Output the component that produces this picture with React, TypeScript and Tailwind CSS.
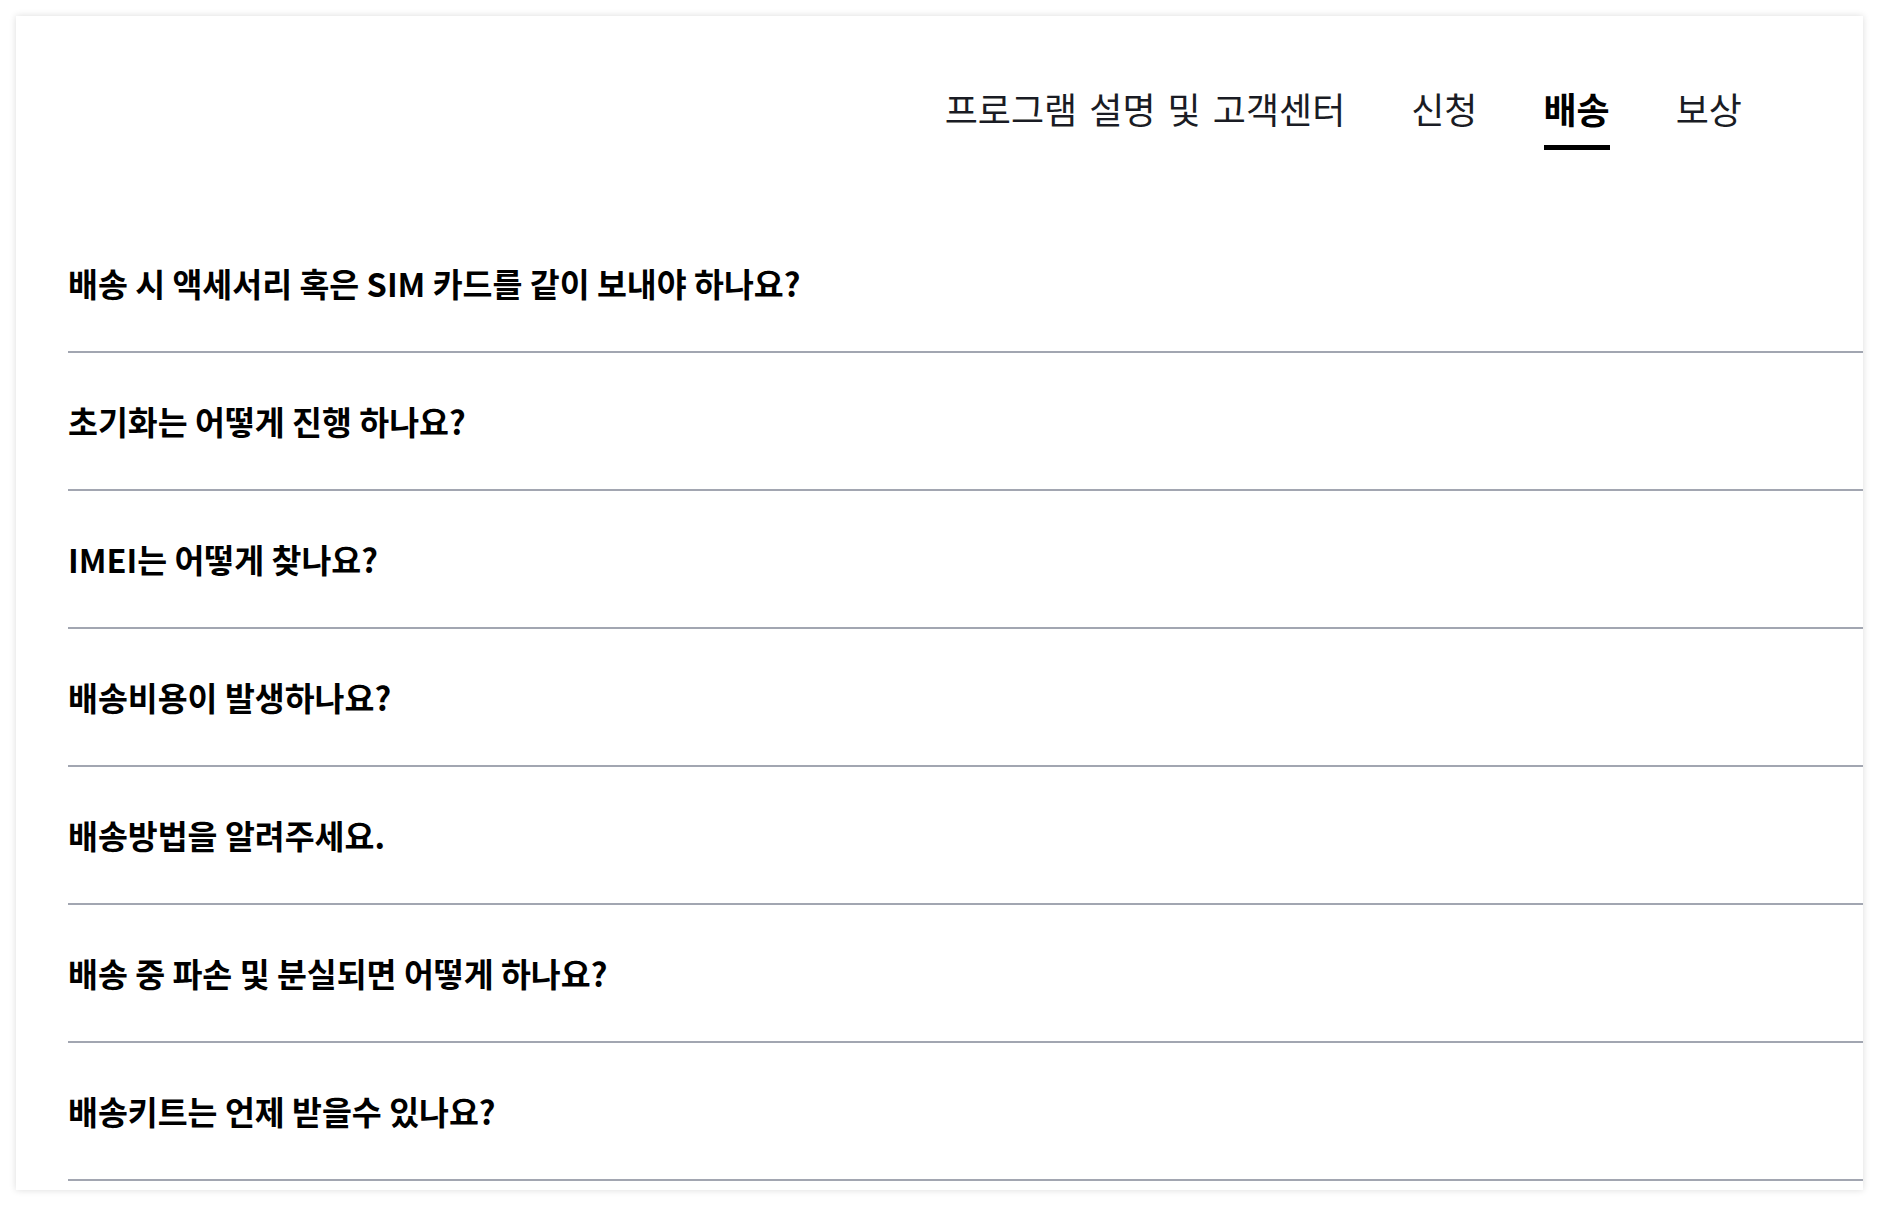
const tabs = ['프로그램 설명 및 고객센터', '신청', '배송', '보상'];

const questions = [
  '배송 시 액세서리 혹은 SIM 카드를 같이 보내야 하나요?',
  '초기화는 어떻게 진행 하나요?',
  'IMEI는 어떻게 찾나요?',
  '배송비용이 발생하나요?',
  '배송방법을 알려주세요.',
  '배송 중 파손 및 분실되면 어떻게 하나요?',
  '배송키트는 언제 받을수 있나요?',
];

export default function App() {
  const active = '배송';

  return (
    <div
      className="min-h-screen bg-white p-4"
      style={{ fontFamily: '"Noto Sans CJK KR", "Noto Sans", sans-serif' }}
    >
      <div className="bg-white h-[1174px] shadow-[0_0_7px_rgba(0,0,0,0.14)]">
        {/* Tabs */}
        <nav className="flex justify-end gap-[66px] pt-[67px] pr-[121px]">
          {tabs.map((tab) => (
            <div key={tab} className="flex flex-col items-center">
              <span
                className={
                  tab === active
                    ? 'text-[36px] leading-[50px] font-bold text-black [word-spacing:4px]'
                    : 'text-[36px] leading-[50px] font-normal text-[#1a1c24] [word-spacing:4px]'
                }
              >
                {tab}
              </span>
              <span
                className={
                  tab === active
                    ? 'mt-[12px] h-[5px] w-full bg-black'
                    : 'mt-[12px] h-[5px] w-full bg-transparent'
                }
              />
            </div>
          ))}
        </nav>

        {/* FAQ list */}
        <ul className="mt-[65px] pl-[52px]">
          {questions.map((q) => (
            <li
              key={q}
              className="flex h-[138px] items-center border-b-2 border-[#a2a6b1]"
            >
              <span className="text-[32.5px] leading-[40px] font-bold text-black">{q}</span>
            </li>
          ))}
        </ul>
      </div>
    </div>
  );
}
